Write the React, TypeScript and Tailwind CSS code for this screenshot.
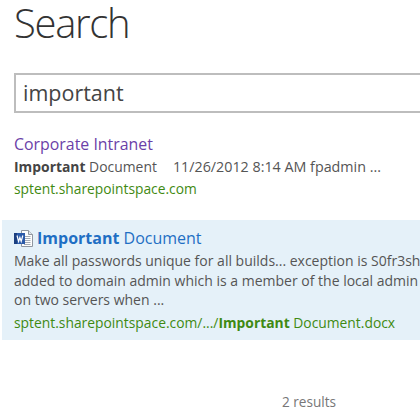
const sans = "font-['Open_Sans','Noto_Sans',sans-serif]";

function WordIcon() {
  return (
    <svg width="19" height="17" viewBox="0 0 19 17" className="shrink-0">
      <path d="M7.5 0.5H14.5L18.5 4.5V16.5H7.5Z" fill="#fdfdfd" stroke="#8f96a0" />
      <path d="M14.5 0.5V4.5H18.5" fill="#dfe5ec" stroke="#8f96a0" />
      <path d="M10 6.5H16.5M10 8.5H16.5M10 10.5H16.5M10 12.5H16.5M10 14.5H16.5" stroke="#a3aab4" />
      <rect x="0" y="3" width="11" height="11" fill="#2b5aa8" />
      <rect x="0" y="3" width="3" height="11" fill="#1c3f80" />
      <path d="M3 5.5L4.6 11.5L5.9 7.5L7.2 11.5L8.8 5.5" fill="none" stroke="#fff" strokeWidth="1.2" />
    </svg>
  );
}

export default function App() {
  return (
    <div className={`${sans} w-[420px] h-[420px] overflow-hidden bg-white`}>
      <h1 className="pl-[14px] text-[40px] leading-[45px] font-light tracking-[-1.3px] text-[#333333]">Search</h1>

      <div className="ml-[14px] mt-[28px] w-[420px] h-[40px] border-2 border-[#bdbdbd] border-r-0 flex items-center pl-[7px] pt-[1px] text-[21.5px] text-[#444444]">
        important
      </div>

      <div className="pl-[14px] mt-[20px]">
        <div className="text-[15.9px] leading-[22px] text-[#6b3fa8]">Corporate Intranet</div>
        <div className="text-[13.9px] leading-[22px] mt-[1px] text-[#555555] whitespace-nowrap">
          <b className="text-[#444444]">Important</b> Document<span className="ml-[16px] text-[14.3px]">11/26/2012 8:14 AM fpadmin ...</span>
        </div>
        <div className="text-[13.8px] leading-[22px] text-[#3f8a12]">sptent.sharepointspace.com</div>
      </div>

      <div className="ml-[2px] mt-[20px] h-[120px] bg-[#e5f1f9] pl-[12px] pt-[6px] whitespace-nowrap">
        <div className="flex items-center gap-[4px] h-[24px] text-[16px] text-[#1f6fc4]">
          <WordIcon />
          <span><b>Important</b> Document</span>
        </div>
        <div className="text-[14px] leading-[19.5px] text-[#555555] mt-[1px]">
          <div>Make all passwords unique for all builds... exception is S0fr3sh</div>
          <div>added to domain admin which is a member of the local admin</div>
          <div>on two servers when ...</div>
        </div>
        <div className="text-[13.85px] leading-[22px] text-[#3f8a12] mt-[2px]">
          sptent.sharepointspace.com/.../<b>Important</b> Document.docx
        </div>
      </div>

      <div className="mt-[52px] pl-[282px] text-[13.6px] leading-[20px] text-[#777777]">2 results</div>
    </div>
  );
}
